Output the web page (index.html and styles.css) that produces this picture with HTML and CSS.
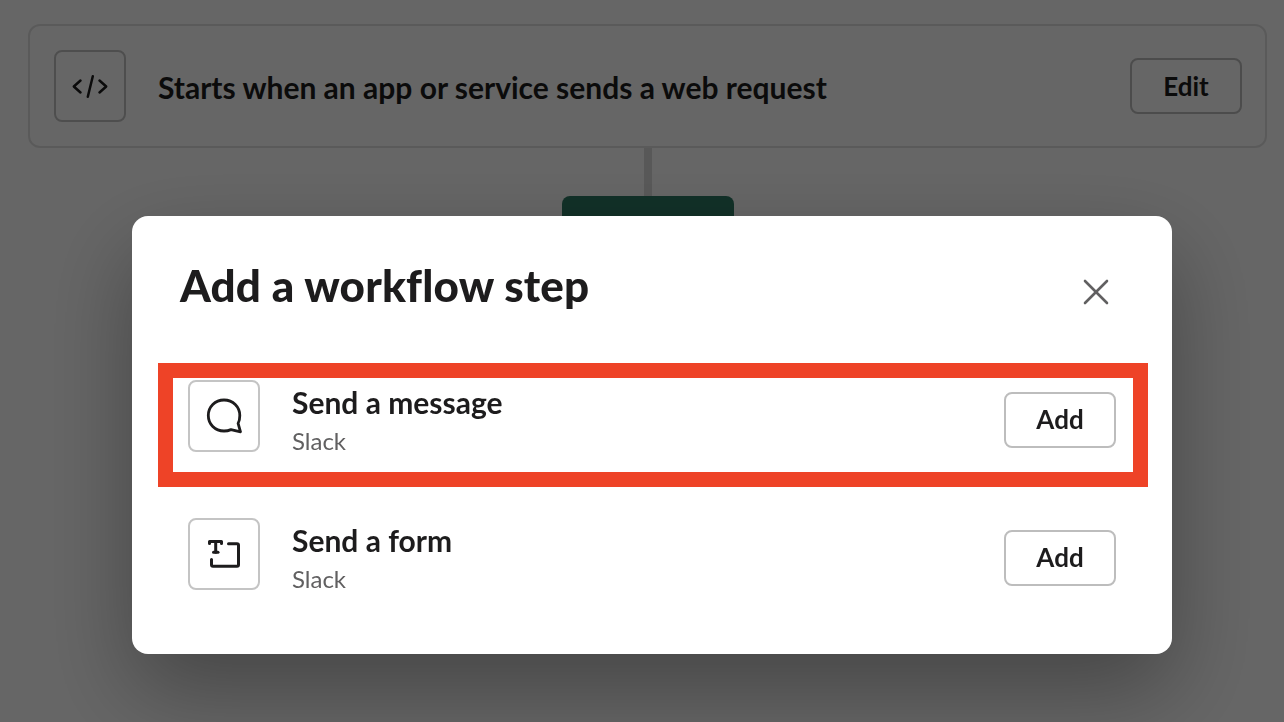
FILE: index.html
```html
<!DOCTYPE html>
<html lang="en">
<head>
<meta charset="utf-8">
<title>Add a workflow step</title>
<link rel="stylesheet" href="styles.css">
</head>
<body>
<main class="canvas">
  <section class="trigger">
    <div class="icon-box icon-box-dim">
      <svg width="36" height="36" viewBox="0 0 36 36" fill="none" stroke="currentColor" stroke-width="2.500" stroke-linecap="round" stroke-linejoin="round"><path d="M8.500 12.500 1.800 18.500l6.700 6"/><path d="M27.500 12.500 34.200 18.500l-6.700 6"/><path d="M20.800 8.200 15.800 28.800"/></svg>
    </div>
    <h2 class="trigger-text">Starts when an app or service sends a web request</h2>
    <button class="btn btn-dim">Edit</button>
  </section>
  <div class="connector"></div>
  <div class="step-block"></div>
</main>
<div class="scrim">
  <div class="modal">
    <header class="modal-head">
      <h1 class="modal-title">Add a workflow step</h1>
      <svg class="close" width="26" height="26" viewBox="0 0 26 26" fill="none" stroke="currentColor" stroke-width="2.600" stroke-linecap="round"><path d="M2 2l22 22"/><path d="M24 2 2 24"/></svg>
    </header>
    <ul class="steps">
      <li class="step">
        <div class="icon-box">
          <svg width="40" height="40" viewBox="0 0 40 40" fill="none" stroke="currentColor" stroke-width="2.800" stroke-linecap="round" stroke-linejoin="round"><path d="M20 4C11 4 4.300 10.900 4.300 19.500S11 35 20 35c2.500 0 4.800-.5 7-1.400l9.500 2.200-2.400-8.400C35.300 25.300 35.800 22.500 35.800 19.500 35.800 10.900 29 4 20 4Z"/></svg>
        </div>
        <div class="step-text">
          <div class="step-name">Send a message</div>
          <div class="step-source">Slack</div>
        </div>
        <button class="btn">Add</button>
      </li>
      <li class="step">
        <div class="icon-box">
          <svg width="40" height="40" viewBox="0 0 40 40" fill="none" stroke="currentColor" stroke-width="3" stroke-linecap="round" stroke-linejoin="round"><path d="M5.500 9.500v-2h12v2"/><path d="M11.700 7.500v10.700"/><path d="M9.500 18.300h4.500"/><path d="M24.500 9.800h8.500a1.500 1.500 0 0 1 1.500 1.500v19.400a1.500 1.500 0 0 1-1.500 1.500H9a1.500 1.500 0 0 1-1.500-1.500v-5.200"/></svg>
        </div>
        <div class="step-text">
          <div class="step-name">Send a form</div>
          <div class="step-source">Slack</div>
        </div>
        <button class="btn">Add</button>
      </li>
    </ul>
    <div class="highlight"></div>
  </div>
</div>
</body>
</html>
```
FILE: styles.css
```css
* { box-sizing: border-box; }
html, body { margin: 0; height: 100%; }
body {
  background: #fff;
  color: #1d1c1d;
  font-family: Lato, "Liberation Sans", sans-serif;
  overflow: hidden;
}
.canvas {
  width: 1239px;
  margin: 24px 0 0 28px;
  display: flex;
  flex-direction: column;
  align-items: center;
}
.trigger {
  width: 100%;
  height: 124px;
  padding: 0 24px;
  border: 2px solid #e2e2e2;
  border-radius: 12px;
  display: flex;
  align-items: center;
  gap: 32px;
}
.trigger-text {
  flex: 1;
  margin: 0;
  padding-top: 2px;
  font-size: 30px;
  font-weight: 700;
}
.connector { width: 8px; height: 48px; background: #ddd; }
.step-block {
  width: 172px;
  height: 80px;
  border-radius: 8px 8px 0 0;
  background: #2e7a64;
}
.icon-box {
  width: 72px;
  height: 72px;
  flex: none;
  display: flex;
  align-items: center;
  justify-content: center;
  border: 2px solid #c4c4c4;
  border-radius: 8px;
  background: #fff;
}
.icon-box-dim { color: #1d1c1d; }
.btn {
  width: 112px;
  height: 56px;
  flex: none;
  padding: 0;
  border: 2px solid #bdbdbd;
  border-radius: 8px;
  background: #fff;
  color: #1d1c1d;
  font: 700 26px Lato, "Liberation Sans", sans-serif;
}
.btn-dim { margin-right: -1px; }
.scrim {
  position: fixed;
  inset: 0;
  padding: 216px 112px 0 132px;
  background: rgba(0, 0, 0, .6);
}
.modal {
  position: relative;
  height: 438px;
  background: #fff;
  border-radius: 16px;
  box-shadow: 0 36px 90px rgba(0, 0, 0, .33);
}
.modal-head {
  height: 164px;
  padding: 38px 63px 0 48px;
  display: flex;
  justify-content: space-between;
  align-items: flex-start;
}
.modal-title {
  margin: 0;
  font-size: 44px;
  line-height: 62px;
  font-weight: 900;
  letter-spacing: .16px;
}
.close { margin-top: 25px; color: #616061; }
.steps {
  margin: 0;
  padding: 0 56px;
  list-style: none;
  display: flex;
  flex-direction: column;
  gap: 66px;
}
.step {
  height: 72px;
  display: flex;
  align-items: flex-start;
  gap: 32px;
}
.step-text { flex: 1; padding-top: 3px; }
.step-name {
  margin-bottom: 1px;
  font-size: 30px;
  line-height: 38px;
  font-weight: 700;
}
.step-source {
  font-size: 24px;
  line-height: 38px;
  color: #616061;
}
.step .btn { margin-top: 12px; padding-bottom: 2px; }
.highlight {
  position: absolute;
  left: 26px;
  top: 147px;
  width: 990px;
  height: 124px;
  border: 15px solid #ee4327;
}
```
